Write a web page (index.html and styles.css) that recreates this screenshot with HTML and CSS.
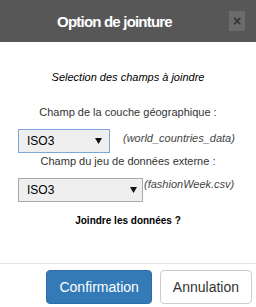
FILE: index.html
```html
<!DOCTYPE html>
<html lang="fr">
<head>
    <meta charset="UTF-8">
    <meta name="viewport" content="width=device-width, initial-scale=1.0">
    <title>Option de jointure</title>
    <link rel="stylesheet" href="styles.css">
</head>
<body>
    <div class="modal">
        <div class="modal-header">
            <h4 class="modal-title">Option de jointure</h4>
            <button type="button" class="close">&times;</button>
        </div>

        <div class="modal-body">
            <p class="subtitle">Selection des champs à joindre</p>

            <p class="field-label">Champ de la couche géographique :</p>
            <div class="field-row">
                <div class="select select-focus">
                    <span>ISO3</span>
                    <svg class="caret" width="7" height="6" viewBox="0 0 7 6"><path d="M0 0H7L3.5 6Z"/></svg>
                </div>
                <span class="source source-geo">(world_countries_data)</span>
            </div>

            <p class="field-label label-ext">Champ du jeu de données externe :</p>
            <div class="field-row">
                <div class="select select-wide">
                    <span>ISO3</span>
                    <svg class="caret" width="7" height="6" viewBox="0 0 7 6"><path d="M0 0H7L3.5 6Z"/></svg>
                </div>
                <span class="source source-ext">(fashionWeek.csv)</span>
            </div>

            <p class="question">Joindre les données ?</p>
        </div>

        <div class="modal-footer">
            <button type="button" class="btn btn-primary">Confirmation</button>
            <button type="button" class="btn btn-default">Annulation</button>
        </div>
    </div>
</body>
</html>
```

FILE: styles.css
```css
body {
    font-family: 'Liberation Sans', Arial, sans-serif;
    margin: 0;
    padding: 0;
    background-color: #fff;
    color: #333;
}
.modal {
    width: 256px;
    height: 307px;
    overflow: hidden;
}
.modal-header {
    display: flex;
    align-items: center;
    height: 42px;
    background-color: #575757;
}
.modal-title {
    flex: 1;
    margin: 0;
    text-align: center;
    color: #fff;
    font-size: 15px;
    font-weight: bold;
    letter-spacing: -0.8px;
}
.close {
    width: 16px;
    height: 20px;
    margin-right: 11px;
    padding: 0;
    border: none;
    background-color: #6b6b6b;
    color: #333;
    font-family: 'Liberation Sans', Arial, sans-serif;
    font-size: 14px;
    font-weight: bold;
    line-height: 20px;
}
.modal-body p {
    margin: 0;
    font-size: 11px;
    line-height: 13px;
    text-align: center;
}
.subtitle {
    padding-top: 29px;
    font-style: italic;
    color: #000;
}
.modal-body .field-label {
    margin-top: 22px;
}
.modal-body .label-ext {
    margin-top: 2px;
}
.field-row {
    display: flex;
    align-items: flex-start;
    margin-top: 10px;
    padding-left: 18px;
}
.select {
    box-sizing: border-box;
    display: flex;
    align-items: center;
    justify-content: space-between;
    width: 92px;
    height: 24px;
    padding: 0 7px 0 8px;
    border: 1px solid #a9a9a9;
    background-color: #efefef;
    color: #000;
    font-size: 12px;
}
.select-focus {
    border-color: #7ea6de;
}
.select-wide {
    width: 125px;
    padding-right: 5px;
}
.caret {
    fill: #111;
}
.source {
    font-size: 11px;
    line-height: 13px;
    font-style: italic;
    color: #444;
}
.source-geo {
    margin: 3px 0 0 13px;
}
.source-ext {
    margin: 0 0 0 1px;
}
.modal-body .question {
    margin: 12px 0 36px;
    font-size: 10px;
    font-weight: bold;
    color: #000;
}
.modal-footer {
    display: flex;
    justify-content: flex-end;
    gap: 8px;
    padding: 6px 4px 0 0;
    border-top: 1px solid #e5e5e5;
}
.btn {
    padding: 6px 12px;
    border: 1px solid transparent;
    border-radius: 4px;
    font-family: 'Liberation Sans', Arial, sans-serif;
    font-size: 14px;
    line-height: 20px;
    cursor: pointer;
}
.btn-primary {
    background-color: #337ab7;
    border-color: #2e6da4;
    color: #fff;
}
.btn-default {
    background-color: #fff;
    border-color: #ccc;
    color: #333;
}
```
